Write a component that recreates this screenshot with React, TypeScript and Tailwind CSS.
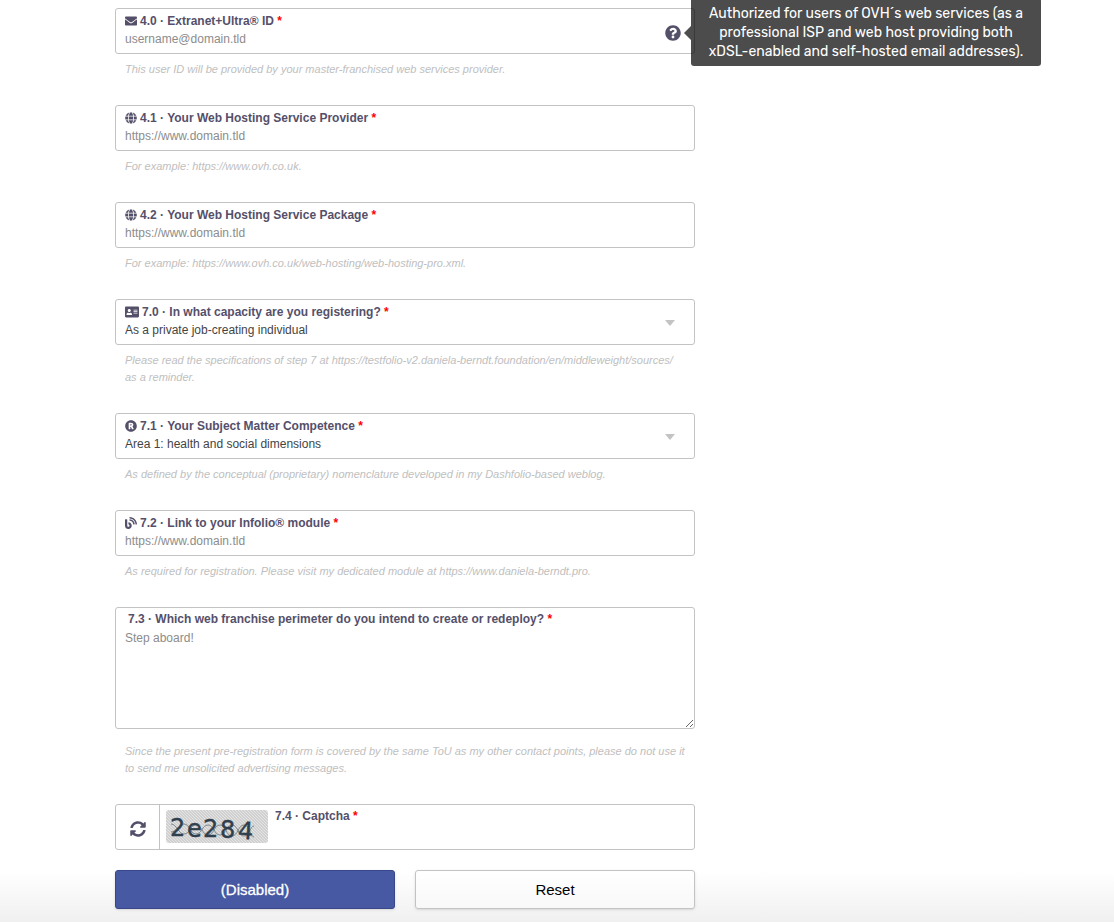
import type { ReactNode } from 'react';
import {
    FaAddressCard,
    FaBlog,
    FaEnvelope,
    FaGlobe,
    FaQuestionCircle,
    FaRegistered,
    FaSyncAlt,
} from 'react-icons/fa';

interface FieldProps {
    id: string;
    label: string;
    icon?: ReactNode;
    hint: string;
    children: ReactNode;
    extra?: ReactNode;
}

function FieldLabel({ id, label, icon }: { id: string; label: string; icon?: ReactNode }) {
    return (
        <label htmlFor={id} className="flex items-center gap-[3px] text-[12px] leading-[16px] font-bold text-[#55506a]">
            {icon}
            <span>
                {label} <span className="text-[#ff0000]">*</span>
            </span>
        </label>
    );
}

function Field({ id, label, icon, hint, children, extra }: FieldProps) {
    return (
        <div className="mb-[27px]">
            <div className="relative rounded-[3px] border border-[#c3c3c3] bg-white px-[9px] py-1">
                <FieldLabel id={id} label={label} icon={icon} />
                {children}
                {extra}
            </div>
            <p className="px-[10px] pt-[7px] text-[11px] leading-[17px] text-[#c0c0c0] italic">{hint}</p>
        </div>
    );
}

const inputClass = 'block h-5 w-full bg-transparent text-[12px] leading-5 text-[#444] outline-none placeholder:text-[#8c8c8c]';

function SelectInput({ id, options }: { id: string; options: string[] }) {
    return (
        <select id={id} className={`${inputClass} appearance-none`}>
            {options.map(o => <option key={o}>{o}</option>)}
        </select>
    );
}

function Arrow() {
    return (
        <svg viewBox="0 0 10 6" className="pointer-events-none absolute top-5 right-[19px] h-[6px] w-[10px]">
            <path d="M0 0h10L5 6z" fill="#c3c3c3" />
        </svg>
    );
}

function Tooltip() {
    return (
        <div className="absolute -top-[11px] -right-[347px] w-[350px]">
            <div className="rounded-[3px] bg-black/70 px-3 pt-[6px] pb-[5px] text-center font-[Rubik,Roboto,sans-serif] text-[14px] leading-[19px] text-white">
                Authorized for users of OVH´s web services (as a professional ISP and web host providing both xDSL-enabled and self-hosted email addresses).
            </div>
            <svg viewBox="0 0 7 14" className="absolute top-[28px] -left-[7px] h-[14px] w-[7px]">
                <path d="M7 0v14L0 7z" fill="#4d4d4d" />
            </svg>
        </div>
    );
}

function CaptchaImage() {
    return (
        <svg viewBox="0 0 102 33" className="h-[33px] w-[102px] overflow-visible" role="img" aria-label="Captcha code">
            <defs>
                <pattern id="grain" width="3" height="3" patternUnits="userSpaceOnUse">
                    <rect width="3" height="3" fill="#d0d0d0" />
                    <path d="M0 0l3 3" stroke="#e4e4e4" strokeWidth="1" />
                </pattern>
            </defs>
            <rect width="102" height="33" rx="3" fill="url(#grain)" />
            <path d="M5 14C11 14 12 24 18 24S24 15 30 15S36 25 42 25S48 15 54 15S60 26 66 26S72 15 78 15S84 27 88 27" fill="none" stroke="#66727b" strokeWidth="0.8" />
            <path d="M5 22C11 22 12 14 18 14S24 24 30 24S36 15 42 15S48 25 54 25S60 15 66 15S72 26 78 26S84 16 88 16" fill="none" stroke="#66727b" strokeWidth="0.8" />
            <g fill="#2f3f4d" stroke="#2f3f4d" strokeWidth="0.4" fontFamily="DejaVu Sans, sans-serif" fontSize="24">
                <text x="4" y="26">2</text>
                <text x="21" y="27">e</text>
                <text x="37" y="27">2</text>
                <text x="54" y="28">8</text>
                <text x="72" y="29" transform="rotate(4 80 21)">4</text>
            </g>
        </svg>
    );
}

export default function App() {
    return (
        <div className="min-h-screen bg-white bg-[linear-gradient(to_top,#f0f0f0,#ffffff_50px)] px-[115px] pt-2 pb-3 font-['Liberation_Sans',Arial,sans-serif]">
            <form className="max-w-[580px]" onSubmit={e => e.preventDefault()}>
                <Field
                    id="extranet"
                    label="4.0 · Extranet+Ultra® ID"
                    icon={<FaEnvelope className="size-3" />}
                    hint="This user ID will be provided by your master-franchised web services provider."
                    extra={
                        <>
                            <button type="button" aria-label="Help" className="absolute top-4 right-[13px] text-[#55506a]">
                                <FaQuestionCircle className="size-4" />
                            </button>
                            <Tooltip />
                        </>
                    }
                >
                    <input id="extranet" type="text" placeholder="username@domain.tld" className={inputClass} />
                </Field>

                <Field
                    id="provider"
                    label="4.1 · Your Web Hosting Service Provider"
                    icon={<FaGlobe className="size-3" />}
                    hint="For example: https://www.ovh.co.uk."
                >
                    <input id="provider" type="url" placeholder="https://www.domain.tld" className={inputClass} />
                </Field>

                <Field
                    id="package"
                    label="4.2 · Your Web Hosting Service Package"
                    icon={<FaGlobe className="size-3" />}
                    hint="For example: https://www.ovh.co.uk/web-hosting/web-hosting-pro.xml."
                >
                    <input id="package" type="url" placeholder="https://www.domain.tld" className={inputClass} />
                </Field>

                <Field
                    id="capacity"
                    label="7.0 · In what capacity are you registering?"
                    icon={<FaAddressCard className="size-[14px]" />}
                    hint="Please read the specifications of step 7 at https://testfolio-v2.daniela-berndt.foundation/en/middleweight/sources/ as a reminder."
                    extra={<Arrow />}
                >
                    <SelectInput id="capacity" options={['As a private job-creating individual']} />
                </Field>

                <Field
                    id="competence"
                    label="7.1 · Your Subject Matter Competence"
                    icon={<FaRegistered className="size-3" />}
                    hint="As defined by the conceptual (proprietary) nomenclature developed in my Dashfolio-based weblog."
                    extra={<Arrow />}
                >
                    <SelectInput id="competence" options={['Area 1: health and social dimensions']} />
                </Field>

                <Field
                    id="infolio"
                    label="7.2 · Link to your Infolio® module"
                    icon={<FaBlog className="size-3" />}
                    hint="As required for registration. Please visit my dedicated module at https://www.daniela-berndt.pro."
                >
                    <input id="infolio" type="url" placeholder="https://www.domain.tld" className={inputClass} />
                </Field>

                <div className="mb-[27px]">
                    <div className="rounded-[3px] border border-[#c3c3c3] bg-white pt-[3px]">
                        <div className="px-3">
                            <FieldLabel id="perimeter" label="7.3 · Which web franchise perimeter do you intend to create or redeploy?" />
                        </div>
                        <textarea
                            id="perimeter"
                            placeholder="Step aboard!"
                            className="block h-[101px] w-full bg-transparent px-[9px] pt-px text-[12px] leading-5 text-[#444] outline-none placeholder:text-[#8c8c8c]"
                        />
                    </div>
                    <p className="px-[10px] pt-[14px] text-[11px] leading-[17px] text-[#c0c0c0] italic">
                        Since the present pre-registration form is covered by the same ToU as my other contact points, please do not use it to send me unsolicited advertising messages.
                    </p>
                </div>

                <div className="flex h-[46px] rounded-[3px] border border-[#c3c3c3] bg-white">
                    <button type="button" aria-label="Refresh captcha" className="flex w-11 items-center justify-center border-r border-[#c3c3c3] pt-1 text-[#55506a]">
                        <FaSyncAlt className="size-4" />
                    </button>
                    <div className="px-[6px] pt-[5px]">
                        <CaptchaImage />
                    </div>
                    <div className="flex-1 pt-[3px] pl-[1px]">
                        <FieldLabel id="captcha" label="7.4 · Captcha" />
                        <input id="captcha" type="text" className={inputClass} />
                    </div>
                </div>

                <div className="mt-5 grid grid-cols-2 gap-5">
                    <button
                        type="submit"
                        disabled
                        className="h-[39px] rounded-[3px] border border-[#37478a] bg-[#4759a2] pt-px text-[15px] text-white shadow-sm [-webkit-text-stroke:0.3px_#fff]"
                    >
                        (Disabled)
                    </button>
                    <button
                        type="reset"
                        className="h-[39px] rounded-[3px] border border-[#c3c3c3] bg-linear-to-b from-white to-[#f8f8f8] pt-px text-[15px] text-black shadow-sm"
                    >
                        Reset
                    </button>
                </div>
            </form>
        </div>
    );
}
